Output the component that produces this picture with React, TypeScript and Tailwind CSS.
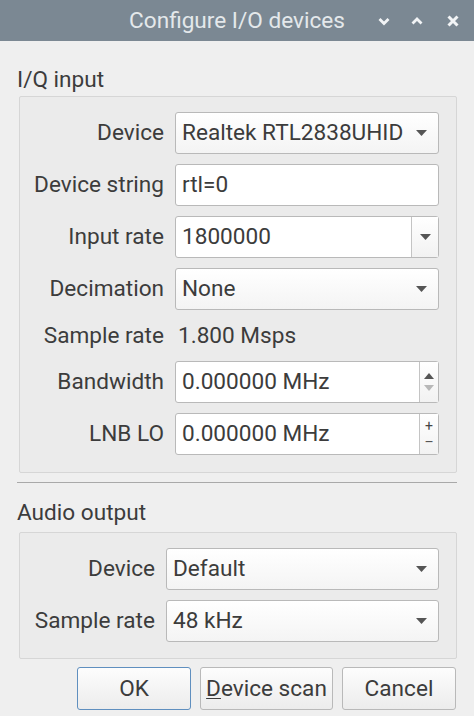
const FONT = "font-['Roboto','Liberation_Sans',sans-serif]";

function Arrow({ className = "fill-[#555]" }: { className?: string }) {
  return (
    <svg width="11" height="6" viewBox="0 0 11 6" className={className}>
      <path d="M0 0h11L5.5 6z" />
    </svg>
  );
}

function Combo({ value }: { value: string }) {
  return (
    <div className="flex h-[42px] items-center justify-between rounded-[3px] border border-[#b9b9b9] bg-gradient-to-b from-white to-[#f4f4f4] pl-[6px] pr-[11px]">
      <span>{value}</span>
      <Arrow />
    </div>
  );
}

function EditCombo({ value }: { value: string }) {
  return (
    <div className="flex h-[42px] items-stretch rounded-[3px] border border-[#b9b9b9] bg-white">
      <span className="flex flex-1 items-center pl-[6px]">{value}</span>
      <div className="flex w-[27px] items-center justify-center border-l border-[#c4c4c4] bg-gradient-to-b from-white to-[#f2f2f2]">
        <Arrow />
      </div>
    </div>
  );
}

function LineEdit({ value }: { value: string }) {
  return (
    <div className="flex h-[42px] items-center rounded-[3px] border border-[#b9b9b9] bg-white pl-[6px]">
      {value}
    </div>
  );
}

function Spin({ value, plusMinus }: { value: string; plusMinus?: boolean }) {
  return (
    <div className="flex h-[42px] items-stretch rounded-[3px] border border-[#b9b9b9] bg-white">
      <span className="flex flex-1 items-center pl-[6px]">{value}</span>
      <div className="flex w-[19px] flex-col items-center justify-center gap-[6px] border-l border-[#c4c4c4] bg-gradient-to-b from-white to-[#f2f2f2]">
        {plusMinus ? (
          <>
            <span className="text-[14px] leading-[10px] text-[#444]">+</span>
            <span className="text-[14px] leading-[10px] text-[#555]">–</span>
          </>
        ) : (
          <>
            <svg width="10" height="6" viewBox="0 0 10 6" className="fill-[#555]">
              <path d="M0 6h10L5 0z" />
            </svg>
            <svg width="10" height="6" viewBox="0 0 10 6" className="fill-[#b8b8b8]">
              <path d="M0 0h10L5 6z" />
            </svg>
          </>
        )}
      </div>
    </div>
  );
}

function Label({ children }: { children: React.ReactNode }) {
  return <div className="flex items-center justify-end whitespace-nowrap">{children}</div>;
}

function Button({ children, className = "" }: { children: React.ReactNode; className?: string }) {
  return (
    <button
      className={
        "h-[43px] rounded-[3px] border bg-gradient-to-b from-[#fdfdfd] to-[#ececec] text-[22.6px] text-[#3c3c3c] " +
        className
      }
    >
      {children}
    </button>
  );
}

export default function App() {
  return (
    <div className={`${FONT} flex h-[716px] w-[474px] flex-col bg-[#efefef] text-[22.6px] leading-[26px] text-[#3c3c3c]`}>
      <div className="relative flex h-[41px] shrink-0 items-center justify-center bg-[#7b8893] text-[#e4e8eb]">
        <span className="text-[22.6px]">Configure I/O devices</span>
        <div className="absolute right-[15px] top-[15px] flex items-center">
          <svg width="12" height="12" viewBox="0 0 12 12" className="stroke-[#f2f4f6]" fill="none" strokeWidth="2.8">
            <path d="M1.5 4l4.5 4.5L10.5 4" />
          </svg>
          <svg width="12" height="12" viewBox="0 0 12 12" className="ml-[21px] stroke-[#f2f4f6]" fill="none" strokeWidth="2.8">
            <path d="M1.5 8.5L6 4l4.5 4.5" />
          </svg>
          <svg width="12" height="12" viewBox="0 0 12 12" className="ml-[24px] stroke-[#f2f4f6]" fill="none" strokeWidth="3">
            <path d="M1.5 1.5l9 9M10.5 1.5l-9 9" />
          </svg>
        </div>
      </div>

      <div className="flex flex-col pl-[17px] pr-[17px]">
        <div className="mt-[26px]">I/Q input</div>
        <div className="ml-[2px] mt-[3px] rounded-[2px] border border-[#d6d6d6] bg-[#ebebeb] pb-[17px] pr-[17px] pt-[15px]">
          <div className="grid grid-cols-[144px_1fr] gap-x-[11px] gap-y-[10px]">
            <Label>Device</Label>
            <Combo value="Realtek RTL2838UHID" />
            <Label>Device string</Label>
            <LineEdit value="rtl=0" />
            <Label>Input rate</Label>
            <EditCombo value="1800000" />
            <Label>Decimation</Label>
            <Combo value="None" />
            <Label>Sample rate</Label>
            <div className="flex h-[31px] items-center pl-[3px]">1.800 Msps</div>
            <Label>Bandwidth</Label>
            <Spin value="0.000000 MHz" />
            <Label>LNB LO</Label>
            <Spin value="0.000000 MHz" plusMinus />
          </div>
        </div>

        <div className="mt-[9px] h-px bg-[#a9a9a9]" />

        <div className="mt-[17px]">Audio output</div>
        <div className="ml-[2px] mt-[6px] rounded-[2px] border border-[#d6d6d6] bg-[#ebebeb] pb-[16px] pr-[17px] pt-[15px]">
          <div className="grid grid-cols-[135px_1fr] gap-x-[11px] gap-y-[10px]">
            <Label>Device</Label>
            <Combo value="Default" />
            <Label>Sample rate</Label>
            <Combo value="48 kHz" />
          </div>
        </div>

        <div className="mt-[8px] flex justify-end gap-[9px] pr-[1px]">
          <Button className="w-[114px] border-[#5f8fbf]">OK</Button>
          <Button className="w-[133px] border-[#b9b9b9]">
            <span className="underline decoration-1 underline-offset-2">D</span>evice scan
          </Button>
          <Button className="w-[114px] border-[#b9b9b9]">Cancel</Button>
        </div>
      </div>
    </div>
  );
}
